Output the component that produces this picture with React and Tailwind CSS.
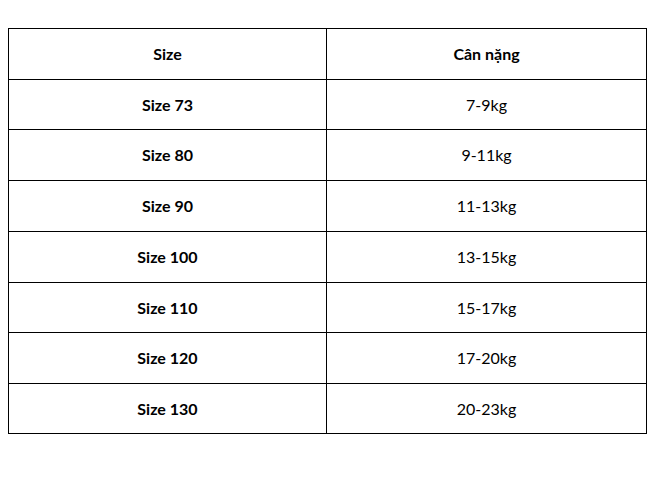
import React from 'react';

const rows = [
  { size: 'Size 73', weight: '7-9kg', h: 'h-[50px]' },
  { size: 'Size 80', weight: '9-11kg', h: 'h-[51px]' },
  { size: 'Size 90', weight: '11-13kg', h: 'h-[51px]' },
  { size: 'Size 100', weight: '13-15kg', h: 'h-[51px]' },
  { size: 'Size 110', weight: '15-17kg', h: 'h-[50px]' },
  { size: 'Size 120', weight: '17-20kg', h: 'h-[51px]' },
  { size: 'Size 130', weight: '20-23kg', h: 'h-[50px]' },
];

export default function App() {
  return (
    <div className="w-[656px] h-[479px] bg-white font-['Lato',sans-serif] text-[16px] text-black">
      <div className="pt-[28px] pl-[8px]">
        <div className="w-[639px] border-t border-l border-black">
          {/* header */}
          <div className="grid grid-cols-[318px_320px] h-[51px]">
            <div className="flex items-center justify-center border-r border-b border-black font-bold">Size</div>
            <div className="flex items-center justify-center border-r border-b border-black font-bold">Cân nặng</div>
          </div>
          {rows.map((r) => (
            <div key={r.size} className={`grid grid-cols-[318px_320px] ${r.h}`}>
              <div className="flex items-center justify-center border-r border-b border-black font-bold">{r.size}</div>
              <div className="flex items-center justify-center border-r border-b border-black">{r.weight}</div>
            </div>
          ))}
        </div>
      </div>
    </div>
  );
}
